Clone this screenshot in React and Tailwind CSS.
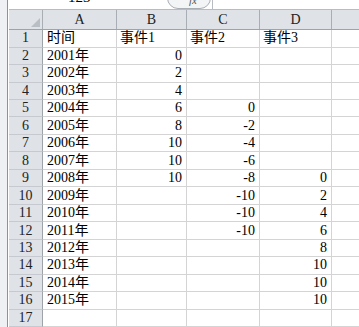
import React from "react";

const rows = [
  ["时间", "事件1", "事件2", "事件3"],
  ["2001年", "0", "", ""],
  ["2002年", "2", "", ""],
  ["2003年", "4", "", ""],
  ["2004年", "6", "0", ""],
  ["2005年", "8", "-2", ""],
  ["2006年", "10", "-4", ""],
  ["2007年", "10", "-6", ""],
  ["2008年", "10", "-8", "0"],
  ["2009年", "", "-10", "2"],
  ["2010年", "", "-10", "4"],
  ["2011年", "", "-10", "6"],
  ["2012年", "", "", "8"],
  ["2013年", "", "", "10"],
  ["2014年", "", "", "10"],
  ["2015年", "", "", "10"],
  ["", "", "", ""],
];

const cols = "grid grid-cols-[34px_74px_70px_73px_72px_1fr]";

export default function App() {
  return (
    <div className="w-[359px] h-[327px] overflow-hidden bg-white flex text-[14px] text-black font-['Liberation_Serif','Noto_Sans_CJK_SC',serif]">
      {/* left frame strip */}
      <div className="w-[8px] h-full bg-[#eef0f3] border-r border-[#8d9299]"></div>
      <div className="w-[1px] h-full bg-white"></div>

      <div className="flex-1 flex flex-col">
        {/* formula bar remnant */}
        <div className="h-[10px] border-b border-[#b8bcc2] bg-white flex overflow-hidden">
          <div className="w-[158px] relative">
            <span className="absolute left-[59px] top-[-10px] leading-[14px] text-[15px]">123</span>
          </div>
          <div className="w-[44px] h-[22px] mt-[-13px] rounded-full border border-[#a9aeb5] bg-[#f3f4f6] flex items-center justify-center">
            <span className="italic text-[11px] text-[#555] mt-[4px] ml-[8px]">fx</span>
          </div>
          <div className="flex-1 border-l border-[#b8bcc2] ml-[1px]"></div>
        </div>

        {/* column header */}
        <div className={`${cols} h-[21px] bg-[#dfe3e8] border-b border-[#9ea3aa]`}>
          <div className="border-r border-[#a9aeb5] relative">
            <svg className="absolute right-[2px] bottom-[2px]" width="9" height="9" viewBox="0 0 9 9">
              <polygon points="9,0 9,9 0,9" fill="#b9bec5" />
            </svg>
          </div>
          {["A", "B", "C", "D"].map((c) => (
            <div key={c} className="border-r border-[#a9aeb5] flex items-center justify-center text-[#222] leading-none pt-[1px]">
              {c}
            </div>
          ))}
          <div></div>
        </div>

        {/* rows */}
        {rows.map((r, i) => (
          <div key={i} className={`${cols} h-[18px]`}>
            <div className="bg-[#dfe3e8] border-r border-b border-[#9ea3aa] border-b-[#c6cad0] flex items-center justify-center text-[#222] leading-none">
              {i + 1}
            </div>
            <div className="border-r border-b border-[#d4d4d4] flex items-center pl-[4px] leading-none whitespace-nowrap">
              {r[0]}
            </div>
            {[1, 2, 3].map((k) => (
              <div
                key={k}
                className={`border-r border-b border-[#d4d4d4] flex items-center leading-none whitespace-nowrap ${
                  i === 0 ? "justify-start pl-[3px]" : "justify-end pr-[4px]"
                }`}
              >
                {r[k]}
              </div>
            ))}
            <div className="border-b border-[#d4d4d4]"></div>
          </div>
        ))}
      </div>
    </div>
  );
}
